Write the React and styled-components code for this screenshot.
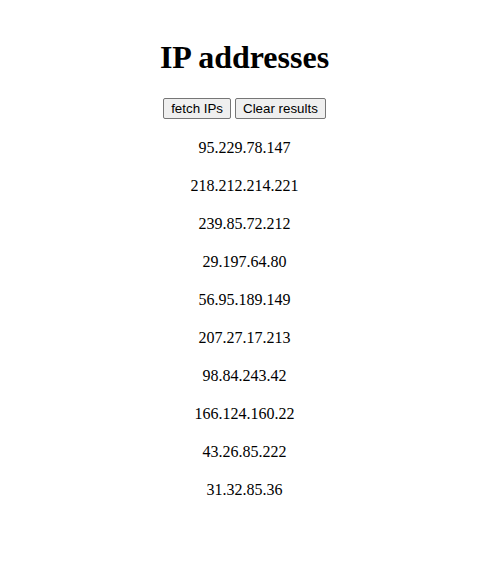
import React, { useState } from 'react';
import styled, { createGlobalStyle } from 'styled-components';

const GlobalStyle = createGlobalStyle`
  body {
    margin: 8px;
    font-family: "Liberation Serif", "Times New Roman", serif;
    background: #fff;
    color: #000;
  }
`;

const initialIps = [
  '95.229.78.147',
  '218.212.214.221',
  '239.85.72.212',
  '29.197.64.80',
  '56.95.189.149',
  '207.27.17.213',
  '98.84.243.42',
  '166.124.160.22',
  '43.26.85.222',
  '31.32.85.36',
];

const App = () => {
  const [ips, setIps] = useState(initialIps);

  return (
    <Wrapper>
      <GlobalStyle />
      <Title>IP addresses</Title>
      <Toolbar>
        <Button onClick={() => setIps(initialIps)}>fetch IPs</Button>
        <Button onClick={() => setIps([])}>Clear results</Button>
      </Toolbar>
      {ips.map((ip) => (
        <IpRow key={ip}>{ip}</IpRow>
      ))}
    </Wrapper>
  );
};

export default App;

const Wrapper = styled.div`
  text-align: center;
  padding: 10px 6px 0 0;
`;

const Title = styled.h1`
  font-size: 32px;
  font-weight: bold;
  margin: 21px 0 22px;
`;

const Toolbar = styled.div`
  display: flex;
  justify-content: center;
  gap: 4px;
`;

const Button = styled.button`
  font-family: "Liberation Sans", Arial, sans-serif;
  font-size: 13.33px;
  padding: 1px 7px;
  background: #efefef;
  color: #000;
  border: 1px solid #767676;
  border-radius: 2px;
  height: 21px;
`;

const IpRow = styled.p`
  font-size: 16px;
  line-height: 18px;
  margin: 20px 0;
`;
